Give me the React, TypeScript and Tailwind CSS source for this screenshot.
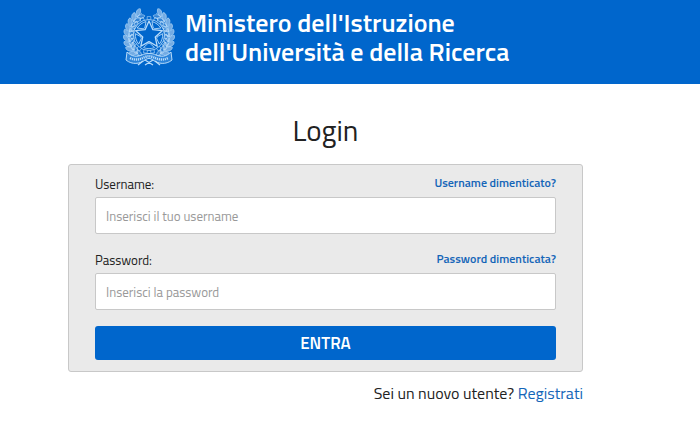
const LEAVES = [
  { x: 16, y: 48, a: -70 },
  { x: 12, y: 44, a: -58 },
  { x: 9, y: 40, a: -45 },
  { x: 7, y: 36, a: -30 },
  { x: 6, y: 31, a: -15 },
  { x: 6, y: 26, a: -2 },
  { x: 7, y: 21, a: 10 },
  { x: 9, y: 16, a: 22 },
  { x: 12, y: 11, a: 36 },
  { x: 16, y: 7, a: 50 },
];

const TEETH = [0, 24, 48, 72, 96, 120, 144, 168, 192, 216, 240, 264, 288, 312, 336];

function Branch() {
  return (
    <g>
      <path d="M21 51C10 46 4 36 6 26C7 17 12 10 19 5" />
      {LEAVES.map((leaf) => (
        <g key={leaf.y} transform={`translate(${leaf.x} ${leaf.y}) rotate(${leaf.a})`}>
          <path d="M0 3C-5 1 -6 -3 -4 -5C-1 -4 1 0 0 3Z" fill="#fff" fillOpacity="0.45" />
          <path d="M0 3C5 1 6 -2 4 -4C1 -3 0 0 0 3Z" fill="#fff" fillOpacity="0.2" />
        </g>
      ))}
    </g>
  );
}

function Emblem() {
  return (
    <svg
      className="h-[60px] w-[52px] shrink-0"
      viewBox="0 0 52 60"
      fill="none"
      stroke="#b9dcfa"
      strokeWidth="0.6"
      strokeLinejoin="round"
      role="img"
      aria-label="Repubblica Italiana"
    >
      <circle cx="26" cy="27" r="15.5" strokeWidth="0.8" />
      {TEETH.map((a) => (
        <path key={a} d="M24.2 11.6V8.6H27.8V11.6" transform={`rotate(${a} 26 27)`} />
      ))}
      {[36, 108, 180, 252, 324].map((a) => (
        <path key={a} d="M20.5 14.4C24 13 28 13 31.5 14.4L27 18.6H25Z" strokeWidth="0.8" transform={`rotate(${a} 26 27)`} />
      ))}
      <path
        d="M26 13L29.9 21.7L39.3 22.7L32.3 29L34.2 38.3L26 33.6L17.8 38.3L19.7 29L12.7 22.7L22.1 21.7Z"
        fill="#06c"
        strokeWidth="1.3"
      />
      <Branch />
      <g transform="translate(52 0) scale(-1 1)">
        <Branch />
      </g>
      <path
        d="M4 44C9 49 14 49 19 47C22 45 30 45 33 47C38 49 43 49 48 44L49 52C43 57 35 56 30 52C27 50 25 50 22 52C17 56 9 57 3 52Z"
        fill="#2b83da"
        strokeWidth="1"
      />
      <path d="M7 50C13 53 18 51 22 49C25 48 27 48 30 49C34 51 39 53 45 50" strokeWidth="2.4" strokeDasharray="1.2 0.8" />
      <path d="M20 53L15 57M32 53L37 57M22 52L30 57M30 52L22 57" strokeWidth="1.3" />
    </svg>
  );
}

type FieldProps = {
  id: string;
  label: string;
  type: string;
  placeholder: string;
  help: string;
};

function Field({ id, label, type, placeholder, help }: FieldProps) {
  return (
    <div>
      <div className="flex items-start justify-between">
        <label htmlFor={id} className="text-[13px] leading-5">
          {label}
        </label>
        <a href="#" className="text-xs leading-[18px] font-semibold text-[#1465b8]">
          {help}
        </a>
      </div>
      <input
        id={id}
        type={type}
        placeholder={placeholder}
        className="mt-[3px] block h-[37px] w-full rounded-xs border border-[#c8c8c8] bg-white px-2.5 text-[13px] outline-none placeholder:text-[#999] focus:border-[#06c]"
      />
    </div>
  );
}

export default function App() {
  return (
    <div className="min-h-screen bg-white font-['Titillium_Web',Roboto,sans-serif] text-[#222]">
      <header className="flex h-[84px] items-start bg-[#06c] pt-2 pr-4 pl-[123px]">
        <a href="#" className="flex items-start gap-2.5 text-white">
          <Emblem />
          <span className="text-[26px] leading-[29px] font-semibold">
            Ministero dell'Istruzione
            <br />
            dell'Università e della Ricerca
          </span>
        </a>
      </header>

      <main className="pt-[26px] pr-[117px] pl-[68px]">
        <h1 className="text-center text-[29px] leading-10">Login</h1>

        <form
          className="mt-3.5 rounded-[3px] border border-[#c8c8c8] bg-[#eaeaea] px-[26px] pt-[9px] pb-[11px]"
          onSubmit={(e) => e.preventDefault()}
        >
          <div className="space-y-4">
            <Field
              id="username"
              label="Username:"
              type="text"
              placeholder="Inserisci il tuo username"
              help="Username dimenticato?"
            />
            <Field
              id="password"
              label="Password:"
              type="password"
              placeholder="Inserisci la password"
              help="Password dimenticata?"
            />
          </div>
          <button
            type="submit"
            className="mt-4 block h-[34px] w-full rounded-[3px] bg-[#06c] pt-0.5 text-[17px] font-semibold text-white"
          >
            ENTRA
          </button>
        </form>

        <p className="mt-[9px] text-right text-base leading-6">
          Sei un nuovo utente?{" "}
          <a href="#" className="text-[#1465b8]">
            Registrati
          </a>
        </p>
      </main>
    </div>
  );
}
